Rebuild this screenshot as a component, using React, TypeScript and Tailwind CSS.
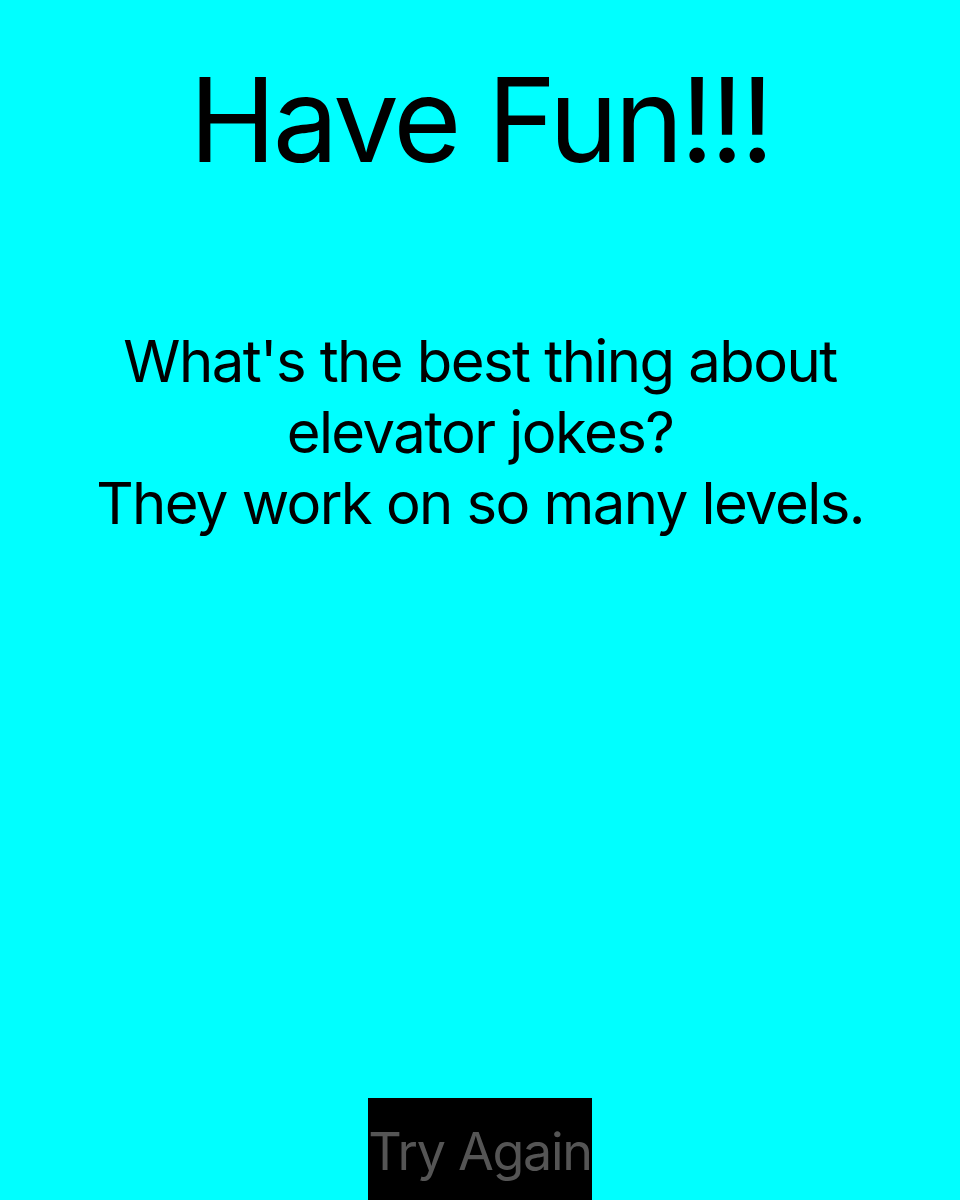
export default function App() {
  return (
    <div
      className="min-h-screen bg-[#00ffff] flex flex-col items-center text-black"
      style={{ fontFamily: 'Inter, "Noto Sans", sans-serif' }}
    >
      <h1 className="mt-[49px] text-[117px] leading-[1.21] font-normal tracking-[-0.03em]">Have Fun!!!</h1>
      <p className="mt-[135px] text-[58px] leading-[71px] text-center tracking-[-0.027em]">
        What's the best thing about
        <br />
        elevator jokes?
        <br />
        They work on so many levels.
      </p>
      <button className="mt-[559px] bg-black text-[#555555] text-[52px] leading-[1.21] tracking-[-0.025em] pt-[23px] pb-[20px]">
        Try Again
      </button>
    </div>
  );
}
